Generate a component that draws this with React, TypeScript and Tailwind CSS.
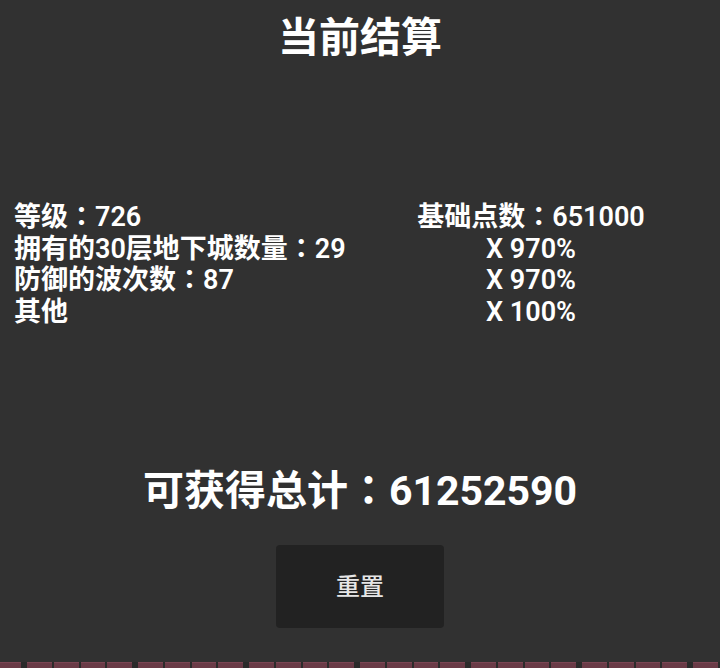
const FONT = { fontFamily: 'Roboto, "Noto Sans CJK SC", sans-serif' };

const rows = [
  { label: "等级：726", value: "基础点数：651000" },
  { label: "拥有的30层地下城数量：29", value: "X 970%" },
  { label: "防御的波次数：87", value: "X 970%" },
  { label: "其他", value: "X 100%" },
];

// full-width colon drawn centred in its cell, as the reference shows it
function T({ s }: { s: string }) {
  const parts = s.split("：");
  return (
    <>
      {parts.map((p, i) => (
        <span key={i}>
          {i > 0 && (
            <span className="leading-[0]" style={{ fontFamily: '"Noto Sans CJK JP", sans-serif' }}>
              ：
            </span>
          )}
          {p}
        </span>
      ))}
    </>
  );
}

function TileStrip() {
  // the top edge of the next panel's tiles, cut off by the window
  return (
    <div className="flex gap-[6px] ml-[-84px] mt-[34px] bg-[#2b2b2b] w-[900px]">
      {Array.from({ length: 8 }).map((_, g) => (
        <div key={g} className="flex w-[105px] gap-[2px] shrink-0">
          {Array.from({ length: 4 }).map((_, c) => (
            <div
              key={c}
              className="flex-1 h-[40px] bg-[#6a3b47] border-t border-[#7b4654]"
            />
          ))}
        </div>
      ))}
    </div>
  );
}

export default function App() {
  return (
    <div
      className="h-[668px] w-[720px] overflow-hidden bg-[#313131] text-white flex flex-col"
      style={FONT}
    >
      <h1 className="mt-[14px] text-center text-[41px] leading-[48px] font-bold">
        当前结算
      </h1>

      <div className="mt-[140px] flex pl-[14px]">
        <div className="w-[328px]">
          {rows.map((r) => (
            <p key={r.label} className="h-[31.5px] text-[27px] leading-[31.5px] font-semibold whitespace-nowrap">
              <T s={r.label} />
            </p>
          ))}
        </div>
        <div className="flex-1 text-center">
          {rows.map((r, i) => (
            <p key={i} className="h-[31.5px] text-[27px] leading-[31.5px] font-semibold whitespace-nowrap">
              <T s={r.value} />
            </p>
          ))}
        </div>
      </div>

      <p className="mt-[137px] h-[52px] text-center text-[41px] leading-[52px] font-bold">
        <T s="可获得总计：61252590" />
      </p>

      <div className="mt-[28px] flex justify-center">
        <button className="w-[168px] h-[83px] rounded-[4px] bg-[#222222] text-[#e6e6e6] text-[24px] font-medium">
          重置
        </button>
      </div>

      <TileStrip />
    </div>
  );
}
